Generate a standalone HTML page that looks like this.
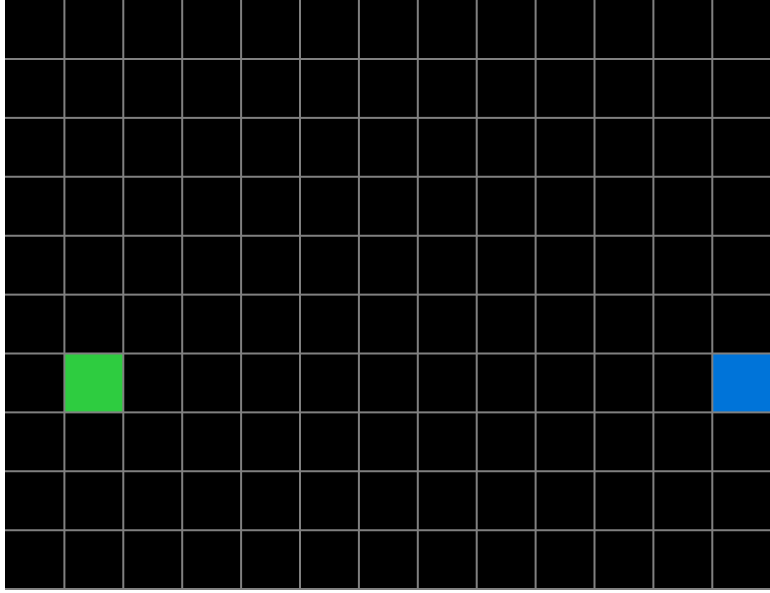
<!DOCTYPE html>
<html><head><style>html,body{margin:0;padding:0;background:#fff;width:770px;height:593px;overflow:hidden}</style></head>
<body>
<svg width="770" height="593" xmlns="http://www.w3.org/2000/svg" style="display:block">
<rect x="5" y="0" width="765" height="589" fill="#000"/>
<rect x="64.4" y="353.4" width="58.9" height="58.9" fill="#2ecc40"/>
<rect x="711.9" y="353.4" width="58.9" height="58.9" fill="#0074d9"/>
<g stroke="#808080" stroke-width="2">
<line x1="64.4" y1="0" x2="64.4" y2="589"/>
<line x1="123.3" y1="0" x2="123.3" y2="589"/>
<line x1="182.2" y1="0" x2="182.2" y2="589"/>
<line x1="241.1" y1="0" x2="241.1" y2="589"/>
<line x1="300" y1="0" x2="300" y2="589"/>
<line x1="358.9" y1="0" x2="358.9" y2="589"/>
<line x1="417.8" y1="0" x2="417.8" y2="589"/>
<line x1="476.7" y1="0" x2="476.7" y2="589"/>
<line x1="535.6" y1="0" x2="535.6" y2="589"/>
<line x1="594.5" y1="0" x2="594.5" y2="589"/>
<line x1="653.4" y1="0" x2="653.4" y2="589"/>
<line x1="712.3" y1="0" x2="712.3" y2="589"/>
<line x1="5" y1="59" x2="770" y2="59"/>
<line x1="5" y1="117.9" x2="770" y2="117.9"/>
<line x1="5" y1="176.8" x2="770" y2="176.8"/>
<line x1="5" y1="235.7" x2="770" y2="235.7"/>
<line x1="5" y1="294.6" x2="770" y2="294.6"/>
<line x1="5" y1="353.5" x2="770" y2="353.5"/>
<line x1="5" y1="412.4" x2="770" y2="412.4"/>
<line x1="5" y1="471.3" x2="770" y2="471.3"/>
<line x1="5" y1="530.2" x2="770" y2="530.2"/>
<line x1="5" y1="589" x2="770" y2="589"/>
</g>
</svg>
</body></html>
